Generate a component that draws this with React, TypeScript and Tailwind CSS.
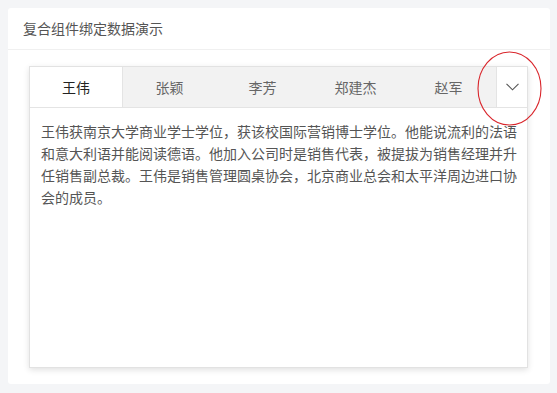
const people = [
  { name: '王伟', bio: '王伟获南京大学商业学士学位，获该校国际营销博士学位。他能说流利的法语和意大利语并能阅读德语。他加入公司时是销售代表，被提拔为销售经理并升任销售副总裁。王伟是销售管理圆桌协会，北京商业总会和太平洋周边进口协会的成员。' },
  { name: '张颖', bio: '' },
  { name: '李芳', bio: '' },
  { name: '郑建杰', bio: '' },
  { name: '赵军', bio: '' },
];

export default function App() {
  const active = 0;
  return (
    <div className="h-[393px] w-[557px] bg-[#f4f5f7] p-2 font-['Noto_Sans_CJK_SC','Noto_Sans',sans-serif]">
      <div className="relative flex h-[376px] w-[542px] flex-col rounded-[3px] bg-white">
        <div className="flex h-[42px] items-center border-b border-[#f0f0f0] px-[15px] text-[14px] text-[#555]">
          复合组件绑定数据演示
        </div>
        <div className="flex-1 px-[21px] pb-4 pt-4">
          <div className="flex h-[302px] w-[499px] flex-col border border-[#e2e2e2] bg-white shadow-[0_2px_6px_rgba(0,0,0,0.12)]">
            <div className="flex h-[41px] border-b border-[#e4e4e4] bg-[#f2f2f2]">
              {people.map((p, i) => (
                <div
                  key={p.name}
                  className={`flex w-[93px] items-center justify-center text-[14px] ${
                    i === active ? 'border-r border-[#e4e4e4] bg-white text-[#222]' : 'text-[#666]'
                  }`}
                >
                  {p.name}
                </div>
              ))}
              <div className="flex-1" />
              <div className="flex w-[31px] items-center justify-center border-l border-[#e4e4e4] bg-white">
                <svg width="13" height="8" viewBox="0 0 13 8" fill="none">
                  <path d="M0.5 0.8 L6.5 6.8 L12.5 0.8" stroke="#555" strokeWidth="1.1" />
                </svg>
              </div>
            </div>
            <div className="pl-[11px] pr-[4px] pt-3 text-[14px] leading-[22px] text-[#555]">
              {people[active].bio}
            </div>
          </div>
        </div>
        <svg
          className="pointer-events-none absolute left-[469px] top-[43px]"
          width="66"
          height="76"
          viewBox="0 0 66 76"
          fill="none"
        >
          <ellipse cx="32.5" cy="37.5" rx="31.5" ry="36.5" stroke="#d9262c" strokeWidth="1.1" />
        </svg>
      </div>
    </div>
  );
}
